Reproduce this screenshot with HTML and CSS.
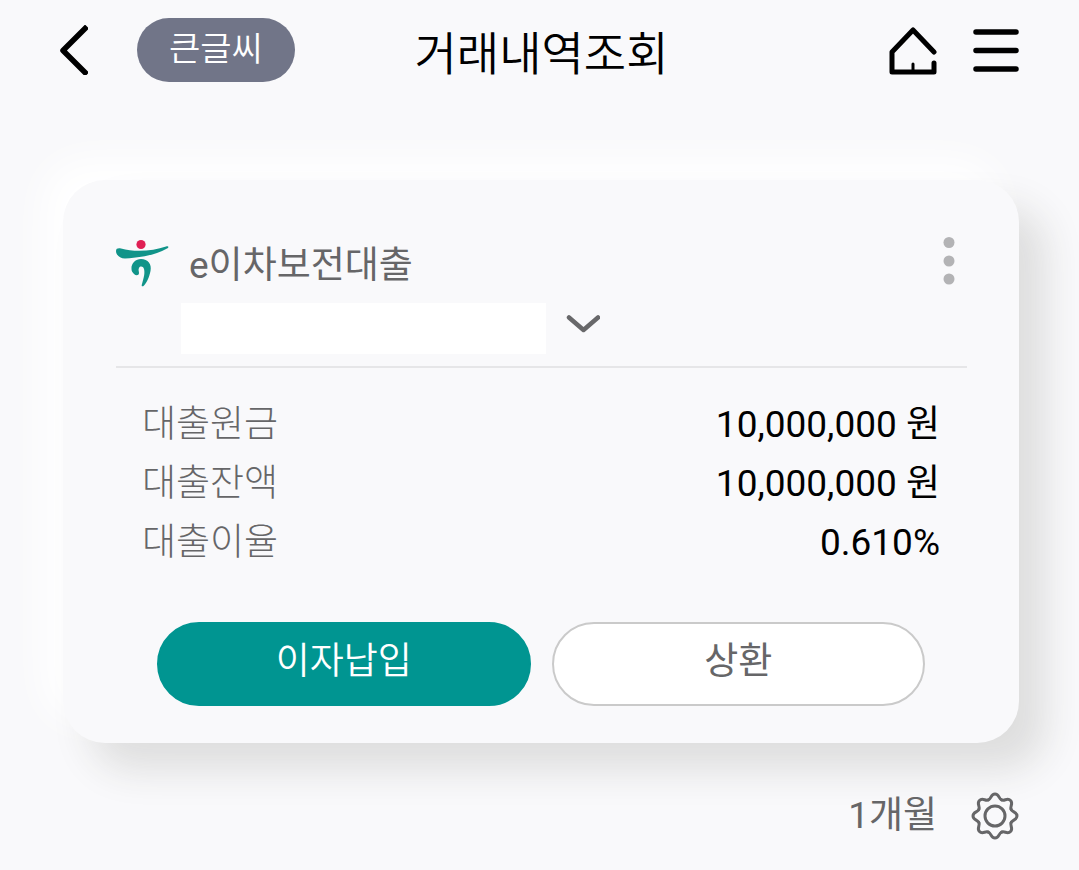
FILE: index.html
```html
<!DOCTYPE html>
<html lang="ko">
<head>
<meta charset="utf-8">
<meta name="viewport" content="width=device-width, initial-scale=1">
<title>거래내역조회</title>
<link rel="stylesheet" href="styles.css">
</head>
<body>
<header class="topbar">
  <div class="topbar-left">
    <button class="icon-button" type="button" aria-label="뒤로">
      <svg width="28" height="50" viewBox="0 0 28 50" fill="none" stroke="#000" stroke-width="5.500" stroke-linejoin="round"><path d="M27 1.500L3 25.500L27 49.500"/></svg>
    </button>
    <button class="text-size" type="button">큰글씨</button>
  </div>
  <h1 class="title">거래내역조회</h1>
  <nav class="topbar-right">
    <a class="icon-button" href="#home" aria-label="홈">
      <svg width="48" height="50" viewBox="0 0 48 50" fill="none" stroke="#000" stroke-width="5" stroke-linecap="round" stroke-linejoin="round"><path d="M45 27L24 5L3 27V47H45V38"/><path d="M24 39V46" stroke-width="3"/></svg>
    </a>
    <button class="icon-button" type="button" aria-label="전체 메뉴">
      <svg width="46" height="44" viewBox="0 0 46 44" stroke="#000" stroke-width="5.500" stroke-linecap="round"><path d="M3 4H43M3 22.500H43M3 41H43"/></svg>
    </button>
  </nav>
</header>
<main class="content">
  <section class="card">
    <div class="account">
      <svg class="logo" width="53" height="50" viewBox="0 0 53 50"><circle cx="25" cy="5.500" r="4.600" fill="#e01f54"/><path fill="#119489" d="M0 12C0 9.500 2 9 5 9.500C19 13.500 37 12 50 7.500C53 6.500 53 8.500 51 9.500C40 15.500 29 18 9 19.500C4 19.500 0 16 0 12Z"/><path fill="#119489" d="M15.500 30C15 24 20 20 25 20C32 20 36 25 34.500 32C33 39 31 43 28 46.500C26.500 48 25 47.500 26 45C28 38 29 34 28 30C27 27 24 27 23 29C22 31 23 32 23 34C23 36.500 20 37 18 35C16.500 33.500 15.500 32 15.500 30Z"/></svg>
      <h2 class="account-name">e이차보전대출</h2>
      <button class="icon-button more" type="button" aria-label="더보기">
        <svg width="12" height="48" viewBox="0 0 12 48" fill="#b3b3b5"><circle cx="6" cy="5.500" r="5.500"/><circle cx="6" cy="24" r="5.500"/><circle cx="6" cy="42" r="5.500"/></svg>
      </button>
    </div>
    <button class="account-picker" type="button" aria-label="계좌 선택">
      <span class="account-number"></span>
      <svg width="34" height="28" viewBox="0 0 34 28" fill="none" stroke="#68686a" stroke-width="4.500" stroke-linecap="round" stroke-linejoin="round"><path d="M3 2.500L17.500 15L32 2.500"/></svg>
    </button>
    <dl class="details">
      <div class="detail"><dt>대출원금</dt><dd>10,000,000 원</dd></div>
      <div class="detail"><dt>대출잔액</dt><dd>10,000,000 원</dd></div>
      <div class="detail"><dt>대출이율</dt><dd>0.610%</dd></div>
    </dl>
    <div class="actions">
      <button class="action action-primary" type="button">이자납입</button>
      <button class="action" type="button">상환</button>
    </div>
  </section>
  <div class="period">
    <span>1개월</span>
    <button class="icon-button" type="button" aria-label="조회 설정">
      <svg width="48" height="48" viewBox="-24 -24 48 48" fill="none" stroke="#666668" stroke-width="3" stroke-linecap="round">
        <defs><path id="tooth" d="M-6.700 -16.100C-3.600 -17 -4.400 -22 0 -22C4.400 -22 3.600 -17 6.700 -16.100"/></defs>
        <use href="#tooth"/><use href="#tooth" transform="rotate(45)"/><use href="#tooth" transform="rotate(90)"/><use href="#tooth" transform="rotate(135)"/><use href="#tooth" transform="rotate(180)"/><use href="#tooth" transform="rotate(225)"/><use href="#tooth" transform="rotate(270)"/><use href="#tooth" transform="rotate(315)"/>
        <circle r="10"/>
      </svg>
    </button>
  </div>
</main>
</body>
</html>
```
FILE: styles.css
```css
* {
  box-sizing: border-box;
}

body {
  margin: 0;
  background: #f9f9fb;
  color: #000;
  font-family: Roboto, "Noto Sans CJK KR", sans-serif;
  font-size: 37px;
  font-weight: 400;
  line-height: 52px;
}

button {
  padding: 0;
  border: 0;
  background: none;
  color: inherit;
  font: inherit;
  cursor: pointer;
}

svg {
  display: block;
}

.icon-button {
  display: block;
  flex: none;
}

.topbar {
  display: grid;
  grid-template-columns: 1fr auto 1fr;
  align-items: center;
  padding: 18px 60px 0;
}

.topbar-left,
.topbar-right {
  display: flex;
  align-items: center;
}

.topbar-left {
  gap: 49px;
}

.topbar-right {
  justify-content: flex-end;
  gap: 36px;
}

.text-size {
  height: 64px;
  padding: 0 32px 2px;
  border-radius: 32px;
  background: #717588;
  color: #fff;
  font-size: 34px;
  font-weight: 350;
}

.title {
  margin: 0;
  padding: 8px 0 0 4px;
  font-size: 46px;
  font-weight: 350;
}

.content {
  padding: 98px 60px 30px 63px;
}

.card {
  padding: 56px 52px 37px 53px;
  border-radius: 42px;
  background: #f9f9fb;
  box-shadow: 27px 27px 38px #dedede, -20px -20px 38px #fff;
}

.account {
  display: flex;
  align-items: center;
  gap: 20px;
  padding-right: 12px;
}

.account-name {
  flex: 1;
  margin: 0;
  padding-top: 4px;
  color: #666668;
  font-size: 37px;
  font-weight: 400;
}

.more {
  padding-bottom: 6px;
}

.account-picker {
  display: flex;
  align-items: center;
  gap: 20px;
  width: 100%;
  padding: 11px 0 12px 65px;
  border-bottom: 2px solid #e6e6e8;
}

.account-number {
  width: 365px;
  height: 51px;
  background: #fff;
}

.details {
  margin: 0;
  padding: 27px 27px 0 26px;
}

.detail {
  display: flex;
  justify-content: space-between;
  line-height: 59px;
}

.detail dt {
  color: #666668;
  font-weight: 300;
}

.detail dd {
  margin: 0;
}

.actions {
  display: grid;
  grid-template-columns: 1fr 1fr;
  gap: 21px;
  padding: 50px 42px 0 41px;
}

.action {
  height: 84px;
  padding-bottom: 4px;
  border: 2px solid #cacaca;
  border-radius: 42px;
  background: #fff;
  color: #666668;
}

.action-primary {
  border-color: #009591;
  background: #009591;
  color: #fff;
  font-weight: 350;
}

.period {
  display: flex;
  align-items: center;
  justify-content: flex-end;
  gap: 34px;
  padding-top: 47px;
  color: #666668;
}
```
